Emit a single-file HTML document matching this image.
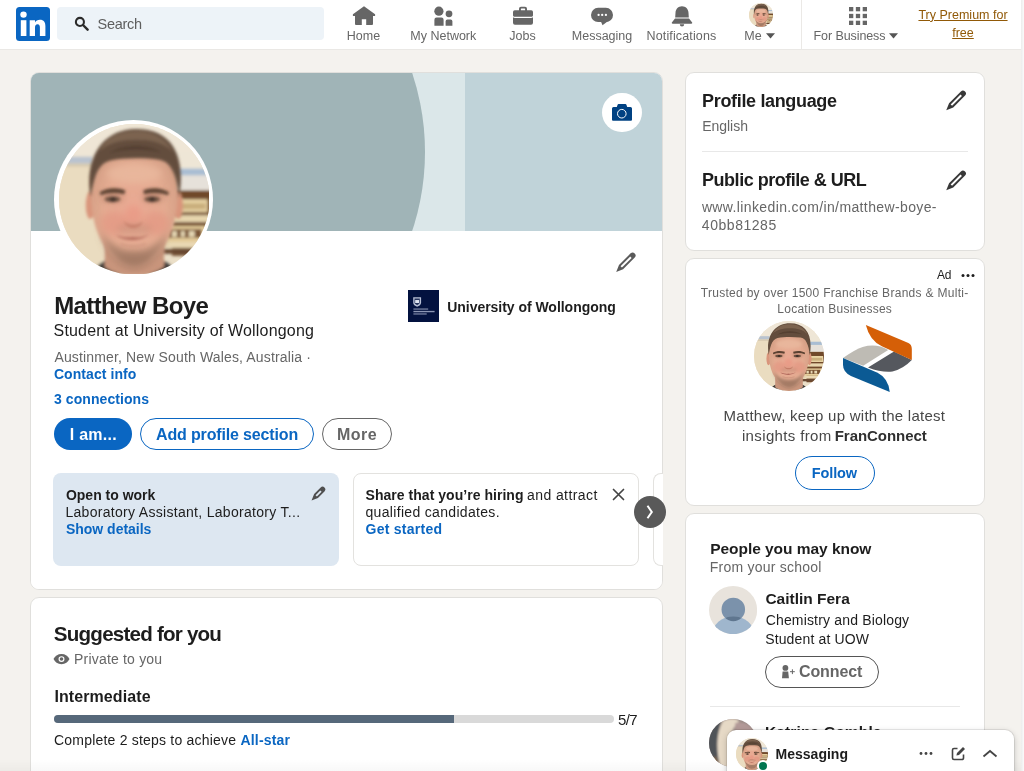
<!DOCTYPE html>
<html><head><meta charset="utf-8">
<style>
*{box-sizing:border-box;margin:0;padding:0}
html,body{width:1024px;height:771px;overflow:hidden}
body{background:#f4f2ee;font-family:"Liberation Sans",sans-serif;color:#1d1d1d;position:relative}
.abs{position:absolute}
.t{position:absolute;white-space:nowrap;line-height:1}
.b{font-weight:bold}
.card{position:absolute;background:#fff;border:1px solid #e0dfdc;border-radius:9px}
.blue{color:#0a66c2}
.gray{color:#666}
.nav{position:absolute;top:29px;font-size:12.5px;color:#666;white-space:nowrap;line-height:14px;transform:translateX(-50%)}
.pill{position:absolute;border-radius:17px;font-weight:bold;font-size:16px;text-align:center;white-space:nowrap}
#root{position:absolute;left:0;top:0;width:1024px;height:771px;overflow:hidden;will-change:transform}
</style></head><body><div id="root">

<!-- HEADER -->
<div class="abs" id="hdr" style="left:0;top:0;width:1021px;height:50px;background:#fff;border-bottom:1px solid #eae8e5"></div>
<!-- logo -->
<svg class="abs" style="left:16px;top:7px" width="34" height="34" viewBox="0 0 34 34"><rect width="34" height="34" rx="3.500" fill="#0a66c2"/><rect x="4.800" y="13.200" width="5.600" height="15.800" fill="#fff"/><circle cx="7.500" cy="7.600" r="3.200" fill="#fff"/><path d="M13.700 13.200h5.300v2.200c.9-1.600 2.600-2.600 4.900-2.600 4 0 5.500 2.500 5.500 6.400V29h-5.500v-8.400c0-2-.6-3.300-2.300-3.300-1.900 0-2.600 1.400-2.600 3.400V29h-5.300z" fill="#fff"/></svg>
<!-- search -->
<div class="abs" style="left:57px;top:7px;width:267px;height:33px;background:#edf3f8;border-radius:4px"></div>
<svg class="abs" style="left:73.500px;top:16px" width="15" height="15" viewBox="0 0 16 16"><circle cx="6.300" cy="6.300" r="4.300" fill="none" stroke="#2b2b2b" stroke-width="2.200"/><path d="M9.600 9.600L14.500 14.500" stroke="#2b2b2b" stroke-width="2.600" stroke-linecap="round"/></svg>
<div class="t" style="left:97.500px;top:17px;font-size:14.500px;color:#5e5e5e;letter-spacing:-.28px">Search</div>

<!-- nav labels -->
<div class="nav" style="left:363.500px">Home</div>
<div class="nav" style="left:443.300px">My Network</div>
<div class="nav" style="left:522.500px">Jobs</div>
<div class="nav" style="left:602px">Messaging</div>
<div class="nav" style="left:681.500px;letter-spacing:.13px">Notifications</div>
<div class="nav" style="left:753px">Me</div>
<div class="nav" style="left:849.500px;letter-spacing:-.09px">For Business</div>
<svg class="abs" style="left:765.500px;top:33px" width="9" height="6"><path d="M0 0.200h9L4.500 5.400z" fill="#555"/></svg>
<svg class="abs" style="left:889.200px;top:33px" width="9" height="6"><path d="M0 0.200h9L4.500 5.400z" fill="#555"/></svg>
<div class="abs" style="left:801px;top:0;width:1px;height:49px;background:#ebe9e6"></div>
<div class="abs" style="left:910px;top:5.500px;width:106px;text-align:center;font-size:12.500px;line-height:18px;color:#915907;text-decoration:underline">Try Premium for<br>free</div>

<!-- nav icons -->
<svg class="abs" id="ic-home" style="left:352px;top:5px" width="24" height="22" viewBox="0 0 24 22"><path d="M12 1.200L.900 9.300v1.600H3V19a1 1 0 0 0 1 1h5.800v-5.800h4.400V20H20a1 1 0 0 0 1-1v-8.100h2.100V9.300z" fill="#666"/></svg>
<svg class="abs" id="ic-net" style="left:432px;top:4px" width="22" height="24" viewBox="0 0 22 24"><circle cx="6.900" cy="7.200" r="4.600" fill="#666"/><circle cx="17" cy="9.800" r="3.400" fill="#666"/><path d="M4.600 13.500h4.800a2.200 2.200 0 0 1 2.200 2.200v6.100H2.400v-6.100a2.200 2.200 0 0 1 2.200-2.200zM15.400 15.500h3.200a1.800 1.800 0 0 1 1.800 1.800v4.500h-6.800v-4.500a1.800 1.800 0 0 1 1.800-1.800z" fill="#666"/></svg>
<svg class="abs" id="ic-jobs" style="left:512px;top:5.500px" width="22" height="20" viewBox="0 0 22 20"><path d="M7 4.300V2.800A2 2 0 0 1 9 .800h4a2 2 0 0 1 2 2v1.500h4.300A1.700 1.700 0 0 1 21 6v3.200c0 1-1 1.600-2 1.600H3c-1 0-2-.6-2-1.600V6a1.700 1.700 0 0 1 1.700-1.700zM8.900 3v1.300h4.200V3a.4.400 0 0 0-.4-.4H9.300a.4.400 0 0 0-.4.400zM1 11.300c.5.500 1.200.8 2 .8h16c.8 0 1.500-.3 2-.8v5.500a1.900 1.900 0 0 1-1.900 1.900H2.900A1.900 1.900 0 0 1 1 16.800z" fill="#666"/></svg>
<svg class="abs" id="ic-msg" style="left:590px;top:7px" width="24" height="20" viewBox="0 0 24 20"><rect x="1" y=".800" width="22" height="14.200" rx="7.100" fill="#666"/><path d="M10.500 13.500l2 4.800 7-5.300z" fill="#666"/><circle cx="8.600" cy="7.900" r="1.150" fill="#fff"/><circle cx="12.200" cy="7.900" r="1.150" fill="#fff"/><circle cx="15.900" cy="7.900" r="1.150" fill="#fff"/></svg>
<svg class="abs" id="ic-bell" style="left:670px;top:5px" width="24" height="22" viewBox="0 0 24 22"><path d="M12 1.300c-3.700 0-6.300 2.800-6.500 6.400l-.3 4.700h13.600l-.3-4.700C18.300 4.100 15.700 1.300 12 1.300zM5 13.600l-3 3.600c-.5.700-.2 1.500.7 1.500h18.600c.9 0 1.200-.8.700-1.500l-3-3.600zM9.800 19.300h4.400a2.200 2.200 0 0 1-4.400 0z" fill="#666"/></svg>
<svg class="abs" id="ic-me" style="left:749px;top:3.400px" width="24" height="24" viewBox="0 0 152 152"><use href="#avg"/></svg>
<svg class="abs" id="ic-grid" style="left:848.500px;top:6.500px" width="18" height="18" viewBox="0 0 18 18"><g fill="#666"><rect x="0" y="0" width="4.300" height="4.300"/><rect x="6.850" y="0" width="4.300" height="4.300"/><rect x="13.700" y="0" width="4.300" height="4.300"/><rect x="0" y="6.850" width="4.300" height="4.300"/><rect x="6.850" y="6.850" width="4.300" height="4.300"/><rect x="13.700" y="6.850" width="4.300" height="4.300"/><rect x="0" y="13.700" width="4.300" height="4.300"/><rect x="6.850" y="13.700" width="4.300" height="4.300"/><rect x="13.700" y="13.700" width="4.300" height="4.300"/></g></svg>

<!-- MAIN PROFILE CARD -->
<div class="card" id="main" style="left:30px;top:72px;width:633px;height:518px;overflow:hidden">
  <div class="abs" style="left:-1px;top:-1px;width:634px;height:160px;background:#c0d3d9"></div>
  <div class="abs" style="left:-1px;top:-1px;width:435px;height:160px;background:#dbe7e9"></div>
  <div class="abs" style="left:-106.500px;top:-171.500px;width:500px;height:500px;border-radius:50%;background:#a0b4b7"></div>
  <div class="abs" style="left:-1px;top:158px;width:634px;height:360px;background:#fff"></div>
</div>
<!-- avatar -->
<div class="abs" id="avatar" style="left:54.200px;top:119.500px;width:159.200px;height:159.200px;border-radius:50%;background:#fff"></div>
<svg class="abs" id="avimg" style="left:58.500px;top:123.800px" width="150.600" height="150.600" viewBox="0 0 152 152">
 <defs><clipPath id="avc"><circle cx="76" cy="76" r="76"/></clipPath>
 <filter id="bl" x="-10%" y="-10%" width="120%" height="120%"><feGaussianBlur stdDeviation="1.600"/></filter>
 <filter id="bl2" x="-20%" y="-20%" width="140%" height="140%"><feGaussianBlur stdDeviation="3.500"/></filter>
 <radialGradient id="skin" cx="50%" cy="52%" r="62%"><stop offset="0" stop-color="#eaa993"/><stop offset=".55" stop-color="#e4ab91"/><stop offset="1" stop-color="#cd9a80"/></radialGradient></defs>
 <g id="avg" clip-path="url(#avc)">
  <rect width="152" height="152" fill="#ebdfc8"/>
  <g filter="url(#bl)">
  <rect x="-5" y="-5" width="162" height="45" fill="#efe6d6"/>
  <rect x="-5" y="42" width="50" height="115" fill="#eadcc0"/>
  <rect x="4" y="33" width="30" height="7" fill="#b9c3cf"/>
  <rect x="4" y="40" width="32" height="3" fill="#d6c9ae"/>
  <rect x="115" y="30" width="45" height="16" fill="#eee6d6"/>
  <rect x="118" y="45" width="40" height="7" fill="#a9bdd3"/>
  <rect x="118" y="52" width="40" height="15" fill="#e6e1da"/>
  <rect x="114" y="67" width="44" height="66" fill="#70492c"/>
  <rect x="118" y="76" width="32" height="13" fill="#e8d4a4"/>
  <rect x="120" y="80" width="28" height="6" fill="#c9ae7c"/>
  <rect x="108" y="92" width="44" height="7" fill="#e7d6ae"/>
  <rect x="108" y="103" width="40" height="16" fill="#e7cf9c"/>
  <rect x="110" y="106" width="34" height="9" fill="#7a5535"/>
  <rect x="114" y="108" width="5" height="6" fill="#e7d9b5"/><rect x="123" y="108" width="4" height="6" fill="#e7d9b5"/><rect x="131" y="108" width="6" height="6" fill="#e7d9b5"/>
  <rect x="104" y="119" width="40" height="6" fill="#ead9b4"/>
  <rect x="100" y="126" width="36" height="5" fill="#6a4a33"/>
  <path d="M34 152c2-8 8-13 18-16h48c10 3 16 8 18 16z" fill="#3f3c3a"/>
  <path d="M46 118h60v26c-8 6-18 9-30 9s-22-3-30-9z" fill="#c9957c"/>
  </g>
  <g filter="url(#bl)">
  <ellipse cx="31.500" cy="82" rx="4.500" ry="14" fill="#d9957b"/>
  <ellipse cx="120.500" cy="82" rx="4.500" ry="14" fill="#d9957b"/>
  <path d="M32 70C29 40 44 22 76 22s47 18 44 48c-1 24-5 38-12 50-7 12-19 25-32 25s-25-13-32-25c-7-12-11-26-12-50z" fill="url(#skin)"/>
  </g>
  <g filter="url(#bl2)">
   <ellipse cx="55" cy="100" rx="13" ry="12" fill="#e4907e" opacity=".5"/>
   <ellipse cx="98" cy="100" rx="13" ry="12" fill="#e4907e" opacity=".5"/>
   <ellipse cx="75" cy="92" rx="9" ry="10" fill="#ea8f7c" opacity=".5"/>
   <ellipse cx="76" cy="50" rx="28" ry="10" fill="#eab99f" opacity=".8"/>
   <path d="M42 108c6 24 22 38 34 38s28-14 34-38c-6 12-18 20-34 20s-28-8-34-20z" fill="#9c7560" opacity=".8"/><ellipse cx="76" cy="137" rx="17" ry="7" fill="#a37a64" opacity=".75"/>
   <ellipse cx="76" cy="106" rx="18" ry="5" fill="#c08a74" opacity=".5"/>
   <ellipse cx="54" cy="74" rx="11" ry="5" fill="#a9755f" opacity=".55"/>
   <ellipse cx="95" cy="74" rx="11" ry="5" fill="#a9755f" opacity=".55"/>
  </g>
  <g filter="url(#bl)">
  <path d="M32 74C25 34 44 5 78 5s51 24 43 70c-1-12-3-22-7-29-3-6-7-9-13-10-16-2-36-2-50 1-7 2-11 7-14 15-2 6-4 14-5 22z" fill="#634d3c"/>
  <path d="M40 28C50 10 64 7 80 7s28 8 36 22c-10-10-22-13-38-13s-28 3-38 12z" fill="#7b6350"/>
  <path d="M50 30c8-6 18-8 28-8s18 2 26 7c-8-2-16-3-26-3s-20 1-28 4z" fill="#544031"/>
  <path d="M41 69c8-5 18-5 26-2l-1 4c-8-2-16-2-24 1zM85 67c8-3 18-3 26 2l-1 3c-8-3-16-3-24-1z" fill="#5b4232"/>
  <ellipse cx="54" cy="76" rx="8" ry="2.800" fill="#6d5141"/><ellipse cx="54.500" cy="76" rx="3.200" ry="2.400" fill="#3f3029"/>
  <ellipse cx="94" cy="76" rx="8" ry="2.800" fill="#6d5141"/><ellipse cx="94" cy="76" rx="3.200" ry="2.400" fill="#3f3029"/>
  <path d="M65 98c3 3 6 4 10 4s7-1 10-4c-2 5-6 7-10 7s-8-2-10-7z" fill="#c57e69"/>
  <path d="M57 112c6 2 12 3 18 2 5 1 11 0 16-3-4 4-10 6-16 6s-13-1-18-5z" fill="#b26a5c"/>
  <path d="M62 121c8 3 18 3 26 0" stroke="#c48c77" stroke-width="2" fill="none" opacity=".6"/>
  </g>
 </g></svg>
<!-- camera button -->
<div class="abs" style="left:602.400px;top:92.900px;width:39.600px;height:39.600px;border-radius:50%;background:#fff"></div>
<svg class="abs" style="left:611.200px;top:102.800px" width="22" height="20" viewBox="0 0 22 20"><path d="M2.500 4.100h3.300l.7-2.200a1.200 1.200 0 0 1 1.100-.8h6.800a1.200 1.200 0 0 1 1.100.8l.7 2.200h3.300A1.500 1.500 0 0 1 21 5.600v11.200a1 1 0 0 1-1 1H2a1 1 0 0 1-1-1V5.600a1.500 1.500 0 0 1 1.500-1.500z" fill="#004182"/><circle cx="10.800" cy="10.700" r="4.300" fill="none" stroke="#fff" stroke-width="1"/></svg>
<!-- uni logo -->
<div class="abs" style="left:407.900px;top:290.300px;width:31.500px;height:31.500px;background:#03123f"></div>
<svg class="abs" style="left:407.900px;top:290.300px" width="31.500" height="31.500" viewBox="0 0 32 32"><path d="M5.300 7.300h8v5.600c0 2-1.800 3.300-4 4-2.200-.7-4-2-4-4z" fill="#b9c1d6"/><path d="M6.600 8.600h5.400v4.200c0 1.200-1.200 2.100-2.700 2.600-1.500-.5-2.700-1.400-2.700-2.600z" fill="#26345c"/><rect x="7.300" y="10.200" width="4" height="3" fill="#dfe4f0"/><rect x="5.500" y="18.800" width="15" height="1.100" fill="#8d97b5"/><rect x="5.500" y="21.200" width="21.500" height="1.400" fill="#8d97b5"/><rect x="5.500" y="23.800" width="13.500" height="1.100" fill="#8d97b5"/></svg>
<!-- pills -->
<div class="pill" style="left:54px;top:418.300px;width:78px;height:31.800px;background:#0a66c2"></div>
<div class="pill" style="left:139.500px;top:418.300px;width:174.500px;height:31.800px;border:1px solid #0a66c2;background:#fff"></div>
<div class="pill" style="left:322px;top:418.300px;width:70px;height:31.800px;border:1px solid #666;background:#fff"></div>
<!-- open to work box -->
<div class="abs" style="left:53px;top:473px;width:286px;height:93px;border-radius:8px;background:#dde7f1"></div>
<div class="abs" style="left:353px;top:473px;width:286px;height:93px;border-radius:8px;background:#fff;border:1px solid #e3e2df"></div>
<div class="abs" style="left:653px;top:473px;width:10px;height:93px;border-radius:8px 0 0 8px;background:#fff;border:1px solid #e3e2df;border-right:none"></div>
<svg class="abs" style="left:612px;top:488px" width="13" height="13" viewBox="0 0 13 13"><path d="M1.500 1.500l10 10M11.500 1.500l-10 10" stroke="#444" stroke-width="1.700" stroke-linecap="round"/></svg>
<div class="abs" style="left:634px;top:496px;width:32px;height:32px;border-radius:50%;background:#595959"></div>
<svg class="abs" style="left:645px;top:504px" width="10" height="16" viewBox="0 0 10 16"><path d="M2.500 1.800L6.800 8l-4.300 6.200" stroke="#fff" stroke-width="2" fill="none"/></svg>

<!-- SUGGESTED CARD -->
<div class="card" id="sug" style="left:30px;top:597px;width:633px;height:200px"></div>
<svg class="abs" style="left:53.200px;top:652.500px" width="17" height="12.200" viewBox="0 0 16 12" preserveAspectRatio="none"><path d="M8 1C4.500 1 1.700 3 .5 6c1.200 3 4 5 7.500 5s6.300-2 7.500-5C14.300 3 11.500 1 8 1z" fill="#666"/><circle cx="8" cy="6" r="2.800" fill="#fff"/><circle cx="8" cy="6" r="1.700" fill="#666"/></svg>
<div class="abs" style="left:54px;top:715px;width:559.500px;height:8px;border-radius:4px;background:#d9d9d9"></div>
<div class="abs" style="left:54px;top:715px;width:400px;height:8px;border-radius:4px 0 0 4px;background:#56687a"></div>

<!-- RIGHT COLUMN -->
<div class="card" id="r1" style="left:685px;top:72px;width:300px;height:179px"></div>
<div class="abs" style="left:702px;top:151px;width:266px;height:1px;background:#e8e8e8"></div>
<div class="card" id="r2" style="left:685px;top:258px;width:300px;height:248px"></div>
<svg class="abs" style="left:961px;top:273px" width="14" height="5" viewBox="0 0 14 5"><circle cx="2" cy="2.500" r="1.500" fill="#1d1d1d"/><circle cx="7" cy="2.500" r="1.500" fill="#1d1d1d"/><circle cx="12" cy="2.500" r="1.500" fill="#1d1d1d"/></svg>
<!-- ad face -->
<svg class="abs" style="left:754px;top:321px" width="70" height="70" viewBox="0 0 152 152"><use href="#avg"/></svg>
<!-- franconnect logo -->
<svg class="abs" id="fc" style="left:835px;top:318px" width="85" height="82" viewBox="0 0 799 771">
 <path d="M75 375Q190 295 260 272Q390 235 500 300L265 450Z" fill="#bebbb4"/>
 <path d="M555 315L722 395Q640 480 540 503Q440 515 310 465Z" fill="#55585e"/>
 <path d="M290 65L690 235Q722 250 722 290L722 395L440 265Q325 210 290 65Z" fill="#d55f07"/>
 <path d="M75 375L400 515Q500 565 515 695L150 545Q75 510 75 440Z" fill="#0b5a94"/>
</svg>
<div class="pill" style="left:795px;top:456px;width:80px;height:34px;border:1px solid #0a66c2;background:#fff"></div>

<div class="card" id="r3" style="left:685px;top:513px;width:300px;height:300px"></div>
<!-- placeholder avatar -->
<svg class="abs" style="left:709.400px;top:585.900px" width="48.200" height="48.200" viewBox="0 0 48 48"><defs><clipPath id="pc"><circle cx="24" cy="24" r="24"/></clipPath><clipPath id="hc"><circle cx="24.200" cy="23.300" r="11.700"/></clipPath></defs><g clip-path="url(#pc)"><rect width="48" height="48" fill="#e8e3dc"/><circle cx="24.200" cy="23.300" r="11.700" fill="#7b92ab"/><ellipse cx="24.200" cy="49" rx="21" ry="18.800" fill="#9fb6cd"/><g clip-path="url(#hc)"><ellipse cx="24.200" cy="49" rx="21" ry="18.800" fill="#5f768f"/></g></g></svg>
<div class="pill" style="left:765.400px;top:656.200px;width:113.500px;height:31.400px;border:1px solid #555;background:#fff"></div>
<svg class="abs" style="left:781px;top:664px" width="14" height="15" viewBox="0 0 14 15"><circle cx="4.400" cy="3.900" r="2.900" fill="#666"/><path d="M1.600 7.400h5.600l.7 6.800H1z" fill="#666"/><path d="M11.400 5.300v4.800M9 7.700h4.800" stroke="#666" stroke-width="1"/></svg>
<div class="abs" style="left:710px;top:706px;width:250px;height:1px;background:#e8e8e8"></div>
<!-- second person avatar -->
<svg class="abs" style="left:709.400px;top:719px" width="48.200" height="48.200" viewBox="0 0 48 48"><defs><clipPath id="pc2"><circle cx="24" cy="24" r="24"/></clipPath><filter id="bl3"><feGaussianBlur stdDeviation="1.300"/></filter></defs><g clip-path="url(#pc2)"><rect width="48" height="48" fill="#9c8c88"/><g filter="url(#bl3)"><path d="M-2 -2h16C8 12 6 30 12 50H-2z" fill="#4f5359"/><path d="M14 2c6-3 12-3 16 0-6 6-9 14-9 22s2 16 4 26H12C6 30 8 12 14 2z" fill="#e6d9c6"/><path d="M22 18c4-6 10-8 16-6 6 4 9 10 9 16l-6 22H24c-3-10-4-22-2-32z" fill="#c7a890"/><path d="M26 4c8-2 16 2 20 10-6-3-14-3-20 0z" fill="#b39a98"/><path d="M6 36c2 6 5 10 9 13l-3 1-8-6z" fill="#8a6a48"/></g></g></svg>

<svg class="abs pen" style="left:614.19px;top:250.09px" width="24.12" height="24.12" viewBox="0 0 24 24"><path d="M20.65 7.45L9.06 19.04 2.2 21.8 4.96 14.94 16.55 3.35A2.9 2.9 0 0 1 20.65 7.45z" fill="#5a5a5a"/><polygon points="17.57,7.85 16.15,6.43 6.51,16.08 7.92,17.49" fill="#fff"/></svg>
<svg class="abs pen" style="left:943.85px;top:88.05px" width="24.50" height="24.50" viewBox="0 0 24 24"><path d="M20.65 7.45L9.06 19.04 2.2 21.8 4.96 14.94 16.55 3.35A2.9 2.9 0 0 1 20.65 7.45z" fill="#383838"/><polygon points="17.57,7.85 16.15,6.43 6.51,16.08 7.92,17.49" fill="#fff"/></svg>
<svg class="abs pen" style="left:943.85px;top:167.55px" width="24.50" height="24.50" viewBox="0 0 24 24"><path d="M20.65 7.45L9.06 19.04 2.2 21.8 4.96 14.94 16.55 3.35A2.9 2.9 0 0 1 20.65 7.45z" fill="#383838"/><polygon points="17.57,7.85 16.15,6.43 6.51,16.08 7.92,17.49" fill="#fff"/></svg>
<svg class="abs pen" style="left:309.84px;top:485.03px" width="17.04" height="17.04" viewBox="0 0 24 24"><path d="M20.39 8.99L11.19 18.18 2.2 21.8 5.82 12.81 15.01 3.61A3.8 3.8 0 0 1 20.39 8.99z" fill="#4f4f4f"/><polygon points="16.37,9.53 14.47,7.63 7.82,14.27 9.73,16.18" fill="#dde7f1"/></svg>
<div class="t" style="left:54.18px;top:294.48px;font-size:24px;line-height:24px;color:#1d1d1d;letter-spacing:-0.609px;font-weight:bold;">Matthew Boye</div>
<div class="t" style="left:53.56px;top:322.86px;font-size:16px;line-height:16px;color:#1d1d1d;letter-spacing:0.185px;">Student at University of Wollongong</div>
<div class="t" style="left:54.46px;top:350.15px;font-size:14px;line-height:14px;color:#666666;letter-spacing:0.147px;">Austinmer, New South Wales, Australia ·</div>
<div class="t" style="left:53.93px;top:366.85px;font-size:14px;line-height:14px;color:#0a66c2;letter-spacing:0.072px;font-weight:bold;">Contact info</div>
<div class="t" style="left:54.02px;top:391.65px;font-size:14px;line-height:14px;color:#0a66c2;letter-spacing:0.068px;font-weight:bold;">3 connections</div>
<div class="t" style="left:69.82px;top:426.86px;font-size:16px;line-height:16px;color:#ffffff;letter-spacing:0.241px;font-weight:bold;">I am...</div>
<div class="t" style="left:156.02px;top:426.86px;font-size:16px;line-height:16px;color:#0a66c2;letter-spacing:-0.150px;font-weight:bold;">Add profile section</div>
<div class="t" style="left:337.05px;top:426.86px;font-size:16px;line-height:16px;color:#666666;letter-spacing:0.427px;font-weight:bold;">More</div>
<div class="t" style="left:447.21px;top:299.65px;font-size:14px;line-height:14px;color:#1d1d1d;letter-spacing:-0.032px;font-weight:bold;">University of Wollongong</div>
<div class="t" style="left:65.93px;top:487.85px;font-size:14px;line-height:14px;color:#1d1d1d;letter-spacing:-0.005px;font-weight:bold;">Open to work</div>
<div class="t" style="left:65.41px;top:505.05px;font-size:14px;line-height:14px;color:#1d1d1d;letter-spacing:0.301px;">Laboratory Assistant, Laboratory T...</div>
<div class="t" style="left:65.98px;top:521.75px;font-size:14px;line-height:14px;color:#0a66c2;letter-spacing:-0.018px;font-weight:bold;">Show details</div>
<div class="t" style="left:365.60px;top:487.85px;font-size:14px;line-height:14px;color:#1d1d1d;letter-spacing:0.032px;font-weight:bold;">Share that you’re hiring</div>
<div class="t" style="left:527.03px;top:487.85px;font-size:14px;line-height:14px;color:#1d1d1d;letter-spacing:0.414px;">and attract</div>
<div class="t" style="left:365.48px;top:505.35px;font-size:14px;line-height:14px;color:#1d1d1d;letter-spacing:0.323px;">qualified candidates.</div>
<div class="t" style="left:365.58px;top:521.75px;font-size:14px;line-height:14px;color:#0a66c2;letter-spacing:0.256px;font-weight:bold;">Get started</div>
<div class="t" style="left:53.86px;top:623.86px;font-size:20.6px;line-height:20.6px;color:#1d1d1d;letter-spacing:-0.796px;font-weight:bold;">Suggested for you</div>
<div class="t" style="left:74.07px;top:651.65px;font-size:14px;line-height:14px;color:#666666;letter-spacing:0.189px;">Private to you</div>
<div class="t" style="left:54.40px;top:689.26px;font-size:16px;line-height:16px;color:#1d1d1d;letter-spacing:0.096px;font-weight:bold;">Intermediate</div>
<div class="t" style="left:617.95px;top:712.30px;font-size:15px;line-height:15px;color:#1d1d1d;letter-spacing:-0.541px;">5/7</div>
<div class="t" style="left:54.00px;top:732.95px;font-size:14px;line-height:14px;color:#1d1d1d;letter-spacing:0.208px;">Complete 2 steps to achieve <b style="color:#0a66c2">All-star</b></div>
<div class="t" style="left:702.10px;top:92.16px;font-size:18px;line-height:18px;color:#1d1d1d;letter-spacing:-0.341px;font-weight:bold;">Profile language</div>
<div class="t" style="left:702.24px;top:118.95px;font-size:14px;line-height:14px;color:#666666;letter-spacing:-0.034px;">English</div>
<div class="t" style="left:702.10px;top:170.76px;font-size:18px;line-height:18px;color:#1d1d1d;letter-spacing:-0.491px;font-weight:bold;">Public profile &amp; URL</div>
<div class="t" style="left:701.89px;top:199.85px;font-size:14px;line-height:14px;color:#666666;letter-spacing:0.379px;">www.linkedin.com/in/matthew-boye-</div>
<div class="t" style="left:701.82px;top:218.15px;font-size:14px;line-height:14px;color:#666666;letter-spacing:0.543px;">40bb81285</div>
<div class="t" style="left:937.05px;top:269.04px;font-size:12px;line-height:12px;color:#1d1d1d;letter-spacing:-0.180px;">Ad</div>
<div class="t" style="left:700.75px;top:287.14px;font-size:12px;line-height:12px;color:#666666;letter-spacing:0.292px;">Trusted by over 1500 Franchise Brands &amp; Multi-</div>
<div class="t" style="left:777.31px;top:303.04px;font-size:12px;line-height:12px;color:#666666;letter-spacing:0.247px;">Location Businesses</div>
<div class="t" style="left:723.62px;top:408.20px;font-size:15px;line-height:15px;color:#474747;letter-spacing:0.256px;">Matthew, keep up with the latest</div>
<div class="t" style="left:741.93px;top:427.60px;font-size:15px;line-height:15px;color:#474747;letter-spacing:0.364px;">insights from</div>
<div class="t" style="left:834.78px;top:427.60px;font-size:15px;line-height:15px;color:#303030;letter-spacing:-0.057px;font-weight:bold;">FranConnect</div>
<div class="t" style="left:811.87px;top:465.63px;font-size:14.5px;line-height:14.5px;color:#0a66c2;letter-spacing:-0.141px;font-weight:bold;">Follow</div>
<div class="t" style="left:710.14px;top:540.68px;font-size:15.5px;line-height:15.5px;color:#1d1d1d;letter-spacing:-0.035px;font-weight:bold;">People you may know</div>
<div class="t" style="left:709.71px;top:559.75px;font-size:14px;line-height:14px;color:#666666;letter-spacing:0.231px;">From your school</div>
<div class="t" style="left:765.38px;top:591.08px;font-size:15.5px;line-height:15.5px;color:#1d1d1d;letter-spacing:-0.003px;font-weight:bold;">Caitlin Fera</div>
<div class="t" style="left:765.65px;top:613.45px;font-size:14px;line-height:14px;color:#1d1d1d;letter-spacing:0.169px;">Chemistry and Biology</div>
<div class="t" style="left:765.16px;top:631.85px;font-size:14px;line-height:14px;color:#1d1d1d;letter-spacing:0.143px;">Student at UOW</div>
<div class="t" style="left:798.94px;top:664.16px;font-size:16px;line-height:16px;color:#666666;letter-spacing:-0.097px;font-weight:bold;">Connect</div>
<div class="t" style="left:764.93px;top:724.38px;font-size:15.5px;line-height:15.5px;color:#1d1d1d;letter-spacing:0.152px;font-weight:bold;">Katrina Gamble</div>

<div class="abs" style="left:0;top:759px;width:1024px;height:12px;background:linear-gradient(rgba(0,0,0,0),rgba(0,0,0,.028))"></div>
<div class="abs" style="left:1021px;top:0;width:3px;height:771px;background:linear-gradient(90deg,#ececec,#fafafa)"></div>
<!-- MESSAGING BAR -->
<div class="abs" style="left:727px;top:730px;width:287px;height:60px;border-radius:9px 9px 0 0;background:#fff;box-shadow:0 0 0 1px rgba(0,0,0,.08),0 2px 6px rgba(0,0,0,.22)"></div>
<svg class="abs" style="left:736px;top:738px" width="32" height="32" viewBox="0 0 152 152"><use href="#avg"/></svg>
<div class="abs" style="left:757px;top:760px;width:12px;height:12px;border-radius:50%;background:#01754f;border:2px solid #fff"></div>
<div class="t b" style="left:775.600px;top:746.700px;font-size:14px;line-height:14px;letter-spacing:0px">Messaging</div>
<svg class="abs" style="left:919px;top:751px" width="14" height="5" viewBox="0 0 14 5"><circle cx="2" cy="2.500" r="1.400" fill="#444"/><circle cx="7" cy="2.500" r="1.400" fill="#444"/><circle cx="12" cy="2.500" r="1.400" fill="#444"/></svg>
<svg class="abs" style="left:951px;top:746px" width="15" height="15" viewBox="0 0 15 15"><path d="M6.500 2.500H3A1.500 1.500 0 0 0 1.500 4v8A1.500 1.500 0 0 0 3 13.500h8A1.500 1.500 0 0 0 12.500 12V8.500" stroke="#444" stroke-width="1.600" fill="none"/><path d="M12 1l2 2-6 6-2.600.6.600-2.600z" fill="#444"/></svg>
<svg class="abs" style="left:982px;top:749px" width="16" height="9" viewBox="0 0 16 9"><path d="M1.500 7.500L8 2l6.500 5.500" stroke="#444" stroke-width="1.800" fill="none"/></svg>

</div></body></html>
